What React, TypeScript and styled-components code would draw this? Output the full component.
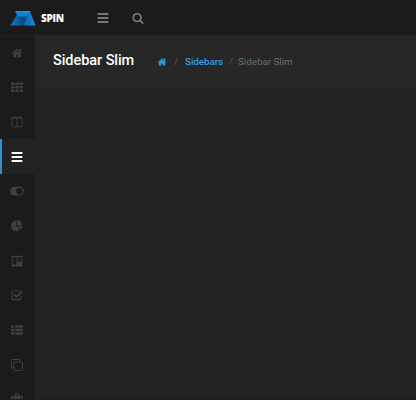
import React from "react";
import styled, { createGlobalStyle } from "styled-components";

const GlobalStyle = createGlobalStyle`
  * { box-sizing: border-box; }
  body { margin: 0; background: #222222; overflow: hidden; }
`;

const Page = styled.div`
  display: flex;
  flex-direction: column;
  width: 416px;
  height: 400px;
  overflow: hidden;
  background: #222222;
  border-bottom: 1px solid #1d1b1c;
  font-family: Roboto, "Liberation Sans", sans-serif;
`;

const TopBar = styled.header`
  display: flex;
  align-items: center;
  flex: 0 0 36px;
  padding-left: 10px;
  background: #1b1b1b;
  border-bottom: 1px solid #222222;
`;

const Brand = styled.a`
  display: flex;
  align-items: center;
  gap: 5px;
  width: 87px;
  color: #ffffff;
`;

const BrandName = styled.span`
  font: 800 10px/16px "Open Sans", "Noto Sans", sans-serif;
  letter-spacing: -0.3px;
`;

const BarButton = styled.button`
  display: flex;
  width: 35px;
  padding: 0;
  border: 0;
  background: none;
  color: #777777;
`;

const Body = styled.div`
  display: flex;
  flex: 1;
  min-height: 0;
`;

const Sidebar = styled.nav`
  display: flex;
  flex-direction: column;
  flex: 0 0 35px;
  overflow: hidden;
  background: #1b1b1b;
`;

const NavItem = styled.a<{ $active?: boolean }>`
  display: flex;
  align-items: center;
  justify-content: center;
  flex: 0 0 34.7px;
  padding-right: ${(p) => (p.$active ? 3 : 1)}px;
  border-left: ${(p) => (p.$active ? "2px solid #2d93d6" : "0")};
  background: ${(p) => (p.$active ? "#222222" : "transparent")};
  color: ${(p) => (p.$active ? "#ffffff" : "#3f3f3f")};

  &:first-child {
    flex-basis: 33.8px;
  }
`;

const Main = styled.main`
  flex: 1;
`;

const PageHeader = styled.div`
  display: flex;
  align-items: center;
  height: 52px;
  padding: 0 0 3px 18px;
  background: #272727;
`;

const Title = styled.h1`
  width: 104px;
  margin: 0;
  font-size: 14.5px;
  font-weight: 500;
  line-height: 20px;
  letter-spacing: -0.06px;
  color: #ffffff;
  white-space: nowrap;
`;

const Crumbs = styled.div`
  display: flex;
  align-items: center;
  padding-top: 3px;
  font-size: 9.8px;
  line-height: 14px;
  color: #6c6c6c;
  white-space: nowrap;
`;

const HomeLink = styled.a`
  display: flex;
  width: 17px;
  padding-bottom: 1px;
  color: #2f9fe6;
`;

const Separator = styled.span<{ $width: number }>`
  width: ${(p) => p.$width}px;
  color: #5a5a5a;
`;

const CrumbLink = styled.a`
  width: 44px;
  font-weight: 500;
  letter-spacing: -0.05px;
  color: #2f9fe6;
`;

const Svg = ({ size = 12, children }: { size?: number; children: React.ReactNode }) => (
  <svg width={size} height={size} viewBox="0 0 12 12" fill="currentColor">
    {children}
  </svg>
);

const FontSvg = ({ size = 12, d }: { size?: number; d: string }) => (
  <svg width={size} height={size} viewBox="0 0 1792 1792" fill="currentColor">
    <path d={d} />
  </svg>
);

const homePath =
  "M1472 992v480q0 26-19 45t-45 19h-384v-384h-256v384h-384q-26 0-45-19t-19-45v-480q0-1 .5-3t.5-3l575-474 575 474q1 2 1 6zm223-69l-62 74q-8 9-21 11h-3q-13 0-21-7l-692-577-692 577q-12 8-24 7-13-2-21-11l-62-74q-8-10-7-23.5t11-21.5l719-599q32-26 76-26t76 26l244 204v-195q0-14 9-23t23-9h192q14 0 23 9t9 23v408l219 182q10 8 11 21.5t-7 23.5z";
const piePath =
  "M768 890l546 546q-106 108-247.5 168t-298.5 60q-209 0-385.5-103t-279.5-279.5-103-385.5 103-385.5 279.5-279.5 385.5-103v762zm187 6h773q0 157-60 298.5t-168 247.5zm709-128h-768v-768q209 0 385.5 103t279.5 279.5 103 385.5z";
const searchPath =
  "M1216 832q0-185-131.5-316.5t-316.5-131.5-316.5 131.5-131.5 316.5 131.5 316.5 316.5 131.5 316.5-131.5 131.5-316.5zm512 832q0 52-38 90t-90 38q-54 0-90-38l-343-342q-179 124-399 124-143 0-273.5-55.5t-225-150-150-225-55.5-273.5 55.5-273.5 150-225 225-150 273.5-55.5 273.5 55.5 225 150 150 225 55.5 273.5q0 220-124 399l343 343q37 37 37 90z";

const Logo = () => (
  <svg width="26" height="16" viewBox="0 0 26 16">
    <defs>
      <linearGradient id="left" x1="0" x2="1">
        <stop offset="0" stopColor="#0a7cc8" />
        <stop offset="1" stopColor="#07508d" />
      </linearGradient>
      <linearGradient id="right" x1="0" x2="1">
        <stop offset="0" stopColor="#0a62ad" />
        <stop offset="1" stopColor="#1590db" />
      </linearGradient>
    </defs>
    <path d="M5.4 1H20l-7.2 14.5L6.8 5z" fill="#074f8f" />
    <path d="M6.9 4.4 13 15.5H.5z" fill="url(#left)" />
    <path d="M20 1l5.5 14.5H12.8z" fill="url(#right)" />
    <path d="M5.2 1H20l-3 5.6H8z" fill="#1285d0" />
    <path d="M5.2 1H20l-.8 1.3H5.9z" fill="#1b9be4" />
  </svg>
);

const MenuBars = () => (
  <Svg>
    <rect x="0.6" y="1" width="10.8" height="2" rx=".4" />
    <rect x="0.6" y="5" width="10.8" height="2" rx=".4" />
    <rect x="0.6" y="9" width="10.8" height="2" rx=".4" />
  </Svg>
);

const Grid = () => (
  <Svg>
    {[1.4, 4.9, 8.4].map((y) =>
      [0, 4.3, 8.6].map((x) => (
        <rect key={`${x}-${y}`} x={x} y={y} width="3.4" height="2.6" rx=".5" />
      ))
    )}
  </Svg>
);

const Columns = () => (
  <Svg>
    <rect x="1" y="1.2" width="10" height="9.6" rx=".7" fill="none" stroke="currentColor" />
    <path d="M1 1h10v1.6H1zM5.5 2h1v9h-1z" />
  </Svg>
);

const Toggle = () => (
  <svg width="14" height="12" viewBox="0 0 14 12">
    <rect x=".2" y="1.8" width="13.6" height="8.8" rx="4.4" fill="currentColor" />
    <circle cx="9.4" cy="6.2" r="3.2" fill="#1b1b1b" />
  </svg>
);

const Board = () => (
  <Svg>
    <path
      fillRule="evenodd"
      d="M1.2.8h9.6q.6 0 .6.6v9.6q0 .6-.6.6H1.2q-.6 0-.6-.6V1.4q0-.6.6-.6zM1.8 2.2v7.4h3.7V2.2zM6.6 2.2v4.6h3.7V2.2z"
    />
  </Svg>
);

const Check = () => (
  <Svg>
    <path
      d="M9.8 7v2.2q0 1.4-1.4 1.4H2.4Q1 10.6 1 9.2V3.2Q1 1.8 2.4 1.8h6"
      fill="none"
      stroke="currentColor"
      strokeWidth="1.1"
    />
    <path d="M3 5.2 5.6 7.7 11 2.5" fill="none" stroke="currentColor" strokeWidth="2" />
  </Svg>
);

const List = () => (
  <Svg>
    {[1.2, 4.7, 8.2].map((y) => (
      <React.Fragment key={y}>
        <rect x="0" y={y} width="3.4" height="2.6" rx=".5" />
        <rect x="4.3" y={y} width="7.7" height="2.6" rx=".5" />
      </React.Fragment>
    ))}
  </Svg>
);

const Clone = () => (
  <Svg>
    <g fill="none" stroke="currentColor" strokeWidth="1">
      <rect x="3" y="3" width="8.5" height="8.5" rx=".7" />
      <path d="M3 9H1.2Q.5 9 .5 8.3V1.2Q.5.5 1.2.5h7.1q.7 0 .7.7V3" />
    </g>
  </Svg>
);

const Suitcase = () => (
  <Svg>
    <path d="M4 3V1.5Q4 .8 4.7.8h2.6Q8 .8 8 1.5V3" fill="none" stroke="currentColor" />
    <path d="M0 3.8Q0 2.6 1.2 2.6h.5v8.6h-.5Q0 11.2 0 10zM2.5 2.6h7v8.6h-7zM10.3 2.6h.5q1.2 0 1.2 1.2V10q0 1.2-1.2 1.2h-.5z" />
  </Svg>
);

const navItems: { name: string; icon: React.ReactNode }[] = [
  { name: "home", icon: <FontSvg d={homePath} /> },
  { name: "grid", icon: <Grid /> },
  { name: "columns", icon: <Columns /> },
  { name: "sidebars", icon: <MenuBars /> },
  { name: "toggle", icon: <Toggle /> },
  { name: "charts", icon: <FontSvg d={piePath} /> },
  { name: "board", icon: <Board /> },
  { name: "forms", icon: <Check /> },
  { name: "list", icon: <List /> },
  { name: "clone", icon: <Clone /> },
  { name: "suitcase", icon: <Suitcase /> },
];

export default function App() {
  return (
    <Page>
      <GlobalStyle />
      <TopBar>
        <Brand>
          <Logo />
          <BrandName>SPIN</BrandName>
        </Brand>
        <BarButton>
          <MenuBars />
        </BarButton>
        <BarButton>
          <FontSvg d={searchPath} />
        </BarButton>
      </TopBar>
      <Body>
        <Sidebar>
          {navItems.map(({ name, icon }) => (
            <NavItem key={name} $active={name === "sidebars"}>
              {icon}
            </NavItem>
          ))}
        </Sidebar>
        <Main>
          <PageHeader>
            <Title>Sidebar Slim</Title>
            <Crumbs>
              <HomeLink>
                <FontSvg size={10} d={homePath} />
              </HomeLink>
              <Separator $width={11}>/</Separator>
              <CrumbLink>Sidebars</CrumbLink>
              <Separator $width={9}>/</Separator>
              <span>Sidebar Slim</span>
            </Crumbs>
          </PageHeader>
        </Main>
      </Body>
    </Page>
  );
}
